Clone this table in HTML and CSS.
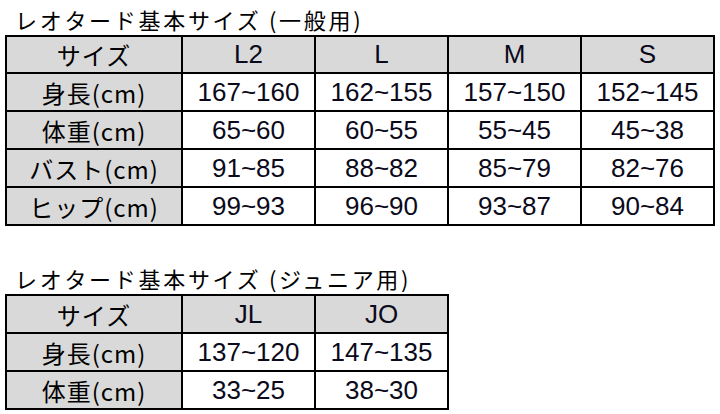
FILE: index.html
```html
<!DOCTYPE html>
<html lang="ja">
<head>
<meta charset="utf-8">
<link rel="stylesheet" href="styles.css">
<title>レオタード基本サイズ</title>
</head>
<body>
<div class="page">
  <div class="title title-first">レオタード基本サイズ (一般用)</div>
  <div class="sheet sheet-wide">
    <div class="cell head label">サイズ</div>
    <div class="cell head num">L2</div>
    <div class="cell head num">L</div>
    <div class="cell head num">M</div>
    <div class="cell head num">S</div>

    <div class="cell label">身長(cm)</div>
    <div class="cell num">167~160</div>
    <div class="cell num">162~155</div>
    <div class="cell num">157~150</div>
    <div class="cell num">152~145</div>

    <div class="cell label">体重(cm)</div>
    <div class="cell num">65~60</div>
    <div class="cell num">60~55</div>
    <div class="cell num">55~45</div>
    <div class="cell num">45~38</div>

    <div class="cell label">バスト(cm)</div>
    <div class="cell num">91~85</div>
    <div class="cell num">88~82</div>
    <div class="cell num">85~79</div>
    <div class="cell num">82~76</div>

    <div class="cell label">ヒップ(cm)</div>
    <div class="cell num">99~93</div>
    <div class="cell num">96~90</div>
    <div class="cell num">93~87</div>
    <div class="cell num">90~84</div>
  </div>

  <div class="title title-second">レオタード基本サイズ (ジュニア用)</div>
  <div class="sheet sheet-narrow">
    <div class="cell head label">サイズ</div>
    <div class="cell head num">JL</div>
    <div class="cell head num">JO</div>

    <div class="cell label">身長(cm)</div>
    <div class="cell num">137~120</div>
    <div class="cell num">147~135</div>

    <div class="cell label">体重(cm)</div>
    <div class="cell num">33~25</div>
    <div class="cell num">38~30</div>
  </div>
</div>
</body>
</html>
```

FILE: styles.css
```css
html, body {
  margin: 0;
  padding: 0;
  background: #ffffff;
}

.page {
  padding-left: 5px;
  font-family: "Noto Sans CJK JP", "Noto Sans", sans-serif;
  color: #000;
}

.title {
  box-sizing: border-box;
  font-size: 22px;
  letter-spacing: 2.7px;
  line-height: 30px;
  padding-left: 10px;
  white-space: nowrap;
}

.title-first {
  height: 35px;
  padding-top: 4px;
}

.title-second {
  height: 31px;
  margin-top: 37px;
}

.sheet {
  display: grid;
  gap: 2px;
  padding: 2px;
  background: #000;
  width: max-content;
}

.sheet-wide {
  grid-template-columns: 174px 131px 131px 131px 131px;
  grid-template-rows: 35px 36px 36px 36px 36px;
}

.sheet-narrow {
  grid-template-columns: 174px 131px 131px;
  grid-template-rows: 36px 36px 36px;
}

.cell {
  background: #ffffff;
  display: flex;
  align-items: center;
  justify-content: center;
  white-space: nowrap;
}

.cell.label {
  background: #d9d9d9;
  font-family: "Noto Sans CJK JP", sans-serif;
  font-size: 24px;
  letter-spacing: 1px;
}

.cell.head {
  background: #d9d9d9;
}

.cell.num {
  font-family: "Liberation Sans", Arial, sans-serif;
  font-size: 26px;
  color: #0a0a1a;
}
```
